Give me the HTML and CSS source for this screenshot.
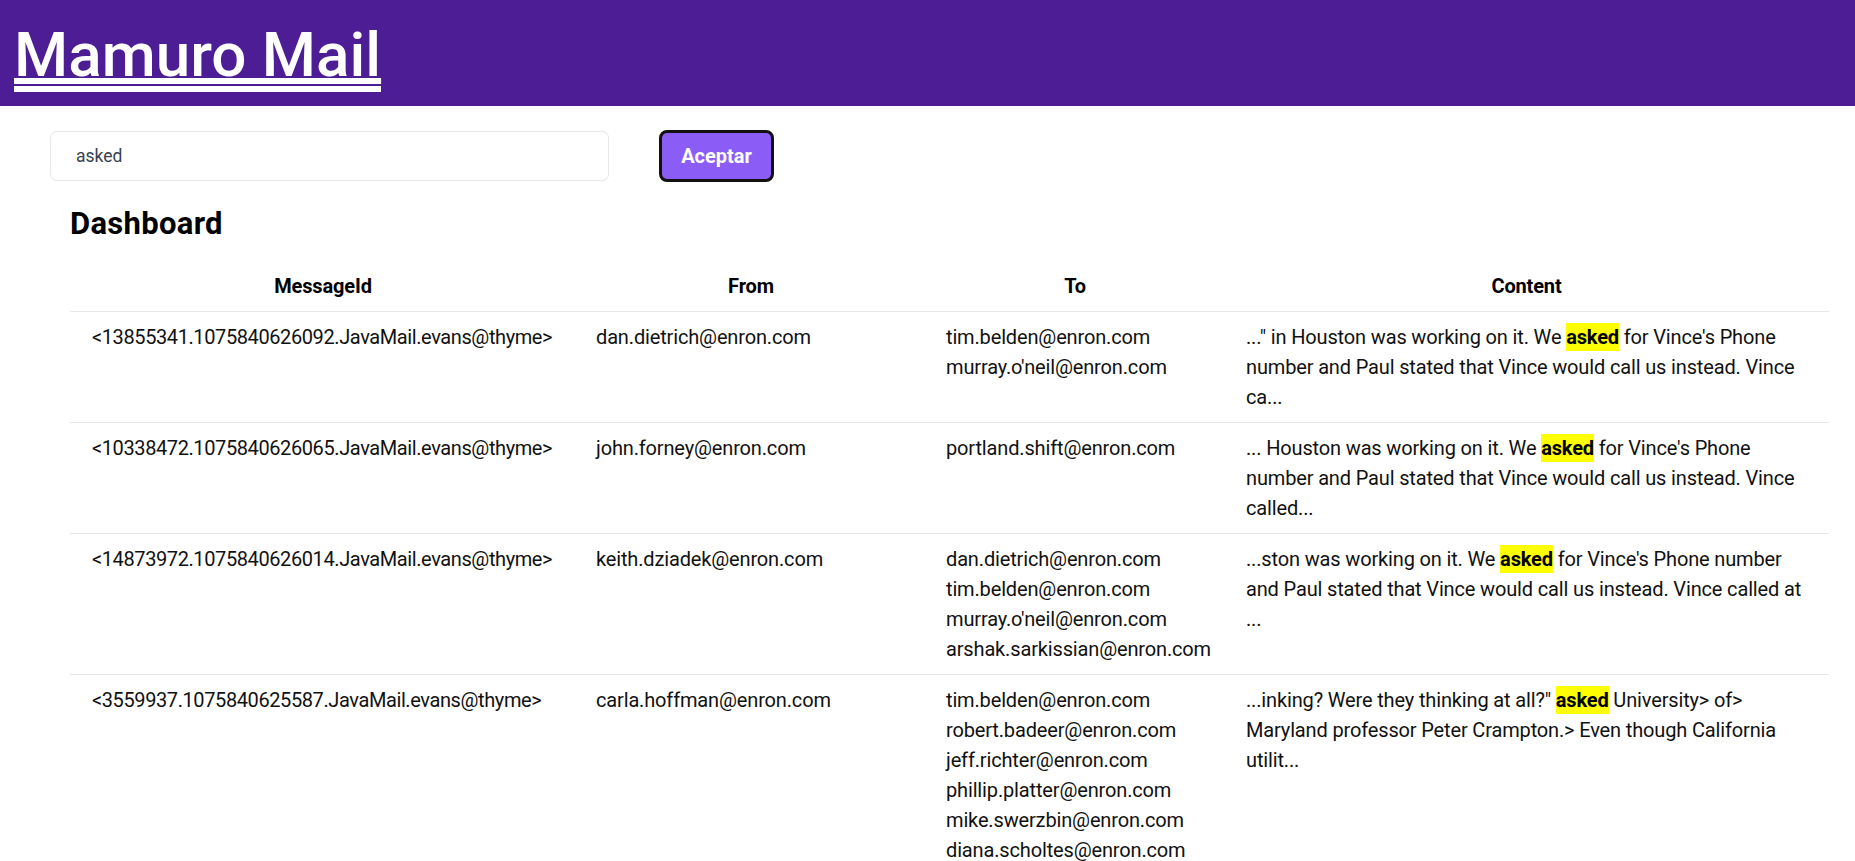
FILE: index.html
```html
<!DOCTYPE html>
<html lang="es">
<head>
<meta charset="utf-8">
<title>Mamuro Mail</title>
<link rel="stylesheet" href="styles.css">
</head>
<body>
<header class="topbar">
  <h1 class="brand"><a href="#" class="brand-link">Mamuro Mail</a></h1>
</header>
<form class="search">
  <input class="search-input" type="text" value="asked">
  <button class="search-btn" type="button">Aceptar</button>
</form>
<main class="dashboard">
  <h2 class="dash-title">Dashboard</h2>
  <table class="mail-table">
    <colgroup>
      <col class="c-id"><col class="c-from"><col class="c-to"><col class="c-content">
    </colgroup>
    <thead>
      <tr><th>MessageId</th><th>From</th><th>To</th><th>Content</th></tr>
    </thead>
    <tbody>
      <tr>
        <td class="mid">&lt;13855341.1075840626092.JavaMail.evans@thyme&gt;</td>
        <td>dan.dietrich@enron.com</td>
        <td><div>tim.belden@enron.com</div><div>murray.o'neil@enron.com</div></td>
        <td>..." in Houston was working on it. We <span class="hl">asked</span> for Vince's Phone number and Paul stated that Vince would call us instead. Vince ca...</td>
      </tr>
      <tr>
        <td class="mid">&lt;10338472.1075840626065.JavaMail.evans@thyme&gt;</td>
        <td>john.forney@enron.com</td>
        <td><div>portland.shift@enron.com</div></td>
        <td>... Houston was working on it. We <span class="hl">asked</span> for Vince's Phone number and Paul stated that Vince would call us instead. Vince called...</td>
      </tr>
      <tr>
        <td class="mid">&lt;14873972.1075840626014.JavaMail.evans@thyme&gt;</td>
        <td>keith.dziadek@enron.com</td>
        <td><div>dan.dietrich@enron.com</div><div>tim.belden@enron.com</div><div>murray.o'neil@enron.com</div><div>arshak.sarkissian@enron.com</div></td>
        <td>...ston was working on it. We <span class="hl">asked</span> for Vince's Phone number and Paul stated that Vince would call us instead. Vince called at ...</td>
      </tr>
      <tr>
        <td class="mid">&lt;3559937.1075840625587.JavaMail.evans@thyme&gt;</td>
        <td>carla.hoffman@enron.com</td>
        <td><div>tim.belden@enron.com</div><div>robert.badeer@enron.com</div><div>jeff.richter@enron.com</div><div>phillip.platter@enron.com</div><div>mike.swerzbin@enron.com</div><div>diana.scholtes@enron.com</div></td>
        <td>...inking? Were they thinking at all?" <span class="hl">asked</span> University&gt; of&gt; Maryland professor Peter Crampton.&gt; Even though California utilit...</td>
      </tr>
    </tbody>
  </table>
</main>
</body>
</html>
```

FILE: styles.css
```css
* { box-sizing: border-box; }
html, body { margin: 0; padding: 0; }
body {
  font-family: Roboto, "Liberation Sans", Arial, sans-serif;
  font-size: 20px;
  line-height: 30px;
  letter-spacing: -0.15px;
  color: #111;
  background: #fff;
}
.topbar {
  background: #4c1d95;
  height: 106px;
  padding: 24px 14px 0;
}
.brand {
  margin: 0;
  font-size: 62px;
  line-height: 62px;
  font-weight: 500;
  letter-spacing: 0;
}
.brand-link {
  display: inline-block;
  color: #fff;
  text-decoration: underline;
  text-decoration-thickness: 6px;
  text-underline-offset: 2px;
  border-bottom: 6px solid #fff;
}
.search {
  display: flex;
  align-items: center;
  margin: 24px 0 0;
  padding-left: 50px;
  gap: 50px;
}
.search-input {
  width: 559px;
  height: 50px;
  border: 1px solid #e5e7eb;
  border-radius: 7px;
  padding: 0 25px;
  font-family: inherit;
  font-size: 17.5px;
  color: #374151;
  outline: none;
}
.search-btn {
  width: 115px;
  height: 52px;
  background: #8b5cf6;
  color: #fff;
  border: 3px solid #111;
  border-radius: 8px;
  font-family: inherit;
  font-size: 20px;
  font-weight: 700;
  padding: 0;
}
.dashboard {
  padding: 0 26px 0 70px;
}
.dash-title {
  margin: 22px 0 0;
  font-size: 31px;
  line-height: 40px;
  font-weight: 700;
  letter-spacing: 0.3px;
  color: #000;
}
.mail-table {
  margin-top: 17px;
  width: 100%;
  table-layout: fixed;
  border-collapse: collapse;
}
.c-id { width: 506px; }
.c-from { width: 350px; }
.c-to { width: 298px; }
.mail-table th {
  font-weight: 700;
  text-align: center;
  padding: 10px 20px;
  color: #000;
  border-bottom: 1px solid #e5e7eb;
}
.mail-table td {
  vertical-align: top;
  text-align: left;
  padding: 10px 20px;
  border-bottom: 1px solid #e5e7eb;
}
.mail-table td:first-child { padding-left: 22px; }
.mail-table td:last-child { padding-left: 22px; }
.mid {
  white-space: nowrap;
  letter-spacing: -0.4px;
}
.hl {
  background: #ffff00;
  font-weight: 700;
  color: #000;
  padding: 2px 0;
}
```
